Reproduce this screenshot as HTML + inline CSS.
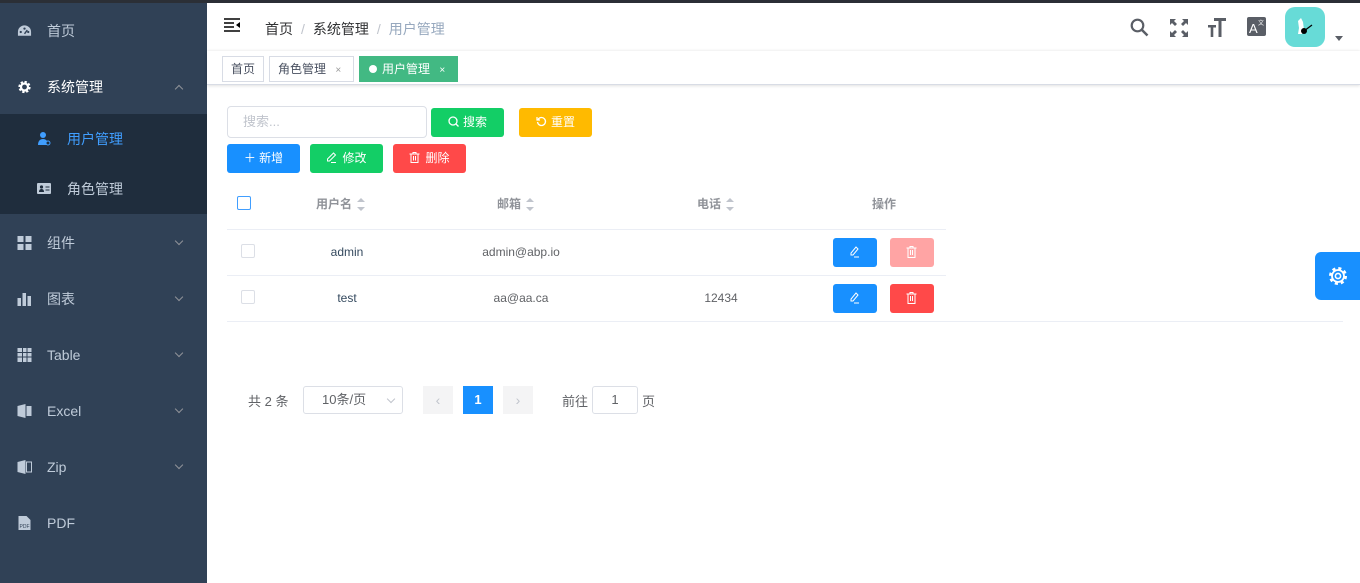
<!DOCTYPE html>
<html><head><meta charset="utf-8"><style>
*{box-sizing:border-box;margin:0;padding:0}
body{width:1360px;height:583px;overflow:hidden;font-family:"Liberation Sans","Noto Sans CJK SC",sans-serif;font-size:14px;background:#fff;position:relative}
.topline{position:absolute;left:0;top:0;width:1360px;height:3px;background:#2b2f36;z-index:5}
.side{position:absolute;left:0;top:0;width:207px;height:583px;background:#304156;color:#bfcbd9}
.mi{position:absolute;left:0;width:207px;height:56px;line-height:56px;padding-left:47px;font-size:14px}
.mi .ic{position:absolute;left:17px;top:21px;width:15px;height:14px}
.mi .ar{position:absolute;left:176px;top:23px;width:6px;height:6px;border-right:1px solid #909399;border-bottom:1px solid #909399;transform:rotate(45deg)}
.mi .up{transform:rotate(-135deg);top:27px}
.sub{position:absolute;left:0;top:114px;width:207px;height:100px;background:#1f2d3d}
.si{position:absolute;left:0;width:207px;height:50px;line-height:50px;padding-left:67px}
.main{position:absolute;left:207px;top:0;right:0;bottom:0}
.hdr{position:absolute;left:0;top:3px;width:1153px;height:48px}
.bc{position:absolute;left:58px;top:16px;font-size:14px;color:#303133}
.bc span.s{color:#c0c4cc;margin:0 8px}
.tags{position:absolute;left:0;top:51px;width:1153px;height:34px;border-bottom:1px solid #d8dce5;box-shadow:0 1px 3px rgba(0,0,0,.12),0 -1px 2px rgba(0,0,0,.04)}
.tag{position:absolute;top:5px;height:26px;line-height:24px;border:1px solid #d8dce5;font-size:12px;color:#495060;padding:0 8px;background:#fff}
.btn{position:absolute;height:29px;line-height:29px;border-radius:3px;color:#fff;font-size:12px;text-align:center}
.th{position:absolute;top:195px;font-size:12px;color:#909399;font-weight:bold}
.sort{display:inline-block;vertical-align:middle;margin-left:5px;width:9px;height:13px;position:relative}
.sort:before{content:"";position:absolute;left:0;top:0;border:4.5px solid transparent;border-bottom-color:#c0c4cc;border-top:0}
.sort:after{content:"";position:absolute;left:0;bottom:0;border:4.5px solid transparent;border-top-color:#c0c4cc;border-bottom:0}
.td{position:absolute;font-size:12px;color:#606266;text-align:center}
.line{position:absolute;height:1px;background:#ebeef5}
.cb{position:absolute;width:14px;height:14px;border:1px solid #dcdfe6;border-radius:2px}
.ab{position:absolute;width:44px;height:29px;border-radius:3px}
.ab svg{position:absolute;left:16px;top:8px}
</style></head><body>
<div class="topline"></div>
<div class="side">
 <div class="mi" style="top:3px"><svg class="ic" viewBox="0 0 16 14"><path d="M8 1a7 7 0 0 0-7 7v4h14V8a7 7 0 0 0-7-7z" fill="#bfcbd9"/><circle cx="4" cy="8" r="1.2" fill="#304156"/><circle cx="8" cy="4.5" r="1.2" fill="#304156"/><circle cx="12" cy="8" r="1.2" fill="#304156"/><path d="M8 10l3-4" stroke="#304156" stroke-width="1.5"/></svg>首页</div>
 <div class="mi" style="top:59px;color:#fff"><svg class="ic" viewBox="0 0 16 16"><circle cx="8" cy="8" r="5.5" fill="none" stroke="#fff" stroke-width="3" stroke-dasharray="2.5 1.8"/><circle cx="8" cy="8" r="4" fill="none" stroke="#fff" stroke-width="2.5"/></svg>系统管理<i class="ar up"></i></div>
 <div class="sub">
  <div class="si" style="top:0;color:#409eff"><svg style="position:absolute;left:37px;top:17px" width="14" height="15" viewBox="0 0 14 15"><circle cx="6" cy="4" r="3" fill="#409eff"/><path d="M1 14c0-4 2-6 5-6s5 2 5 6z" fill="#409eff"/><circle cx="11" cy="12" r="2" fill="#1f2d3d" stroke="#409eff"/></svg>用户管理</div>
  <div class="si" style="top:50px"><svg style="position:absolute;left:37px;top:19px" width="14" height="11" viewBox="0 0 14 11"><rect width="14" height="11" rx="1" fill="#bfcbd9"/><circle cx="4.5" cy="4" r="1.6" fill="#1f2d3d"/><path d="M2 9c0-2 1-3 2.5-3S7 7 7 9z" fill="#1f2d3d"/><path d="M8.5 4h4M8.5 7h4" stroke="#1f2d3d"/></svg>角色管理</div>
 </div>
 <div class="mi" style="top:215px"><svg class="ic" viewBox="0 0 14 14"><rect x="0" y="0" width="6" height="6" fill="#bfcbd9"/><rect x="8" y="0" width="6" height="6" fill="#bfcbd9"/><rect x="0" y="8" width="6" height="6" fill="#bfcbd9"/><rect x="8" y="8" width="6" height="6" fill="#bfcbd9"/></svg>组件<i class="ar"></i></div>
 <div class="mi" style="top:271px"><svg class="ic" viewBox="0 0 14 14"><rect x="0" y="6" width="3.5" height="8" fill="#bfcbd9"/><rect x="5" y="1" width="3.5" height="13" fill="#bfcbd9"/><rect x="10" y="4" width="3.5" height="10" fill="#bfcbd9"/></svg>图表<i class="ar"></i></div>
 <div class="mi" style="top:327px"><svg class="ic" viewBox="0 0 14 14"><rect width="14" height="14" fill="#bfcbd9"/><path d="M0 4.5h14M0 9h14M5 0v14M9.5 0v14" stroke="#304156"/></svg>Table<i class="ar"></i></div>
 <div class="mi" style="top:383px"><svg class="ic" viewBox="0 0 14 14"><path d="M0 2l8-2v14l-8-2z" fill="#bfcbd9"/><rect x="9" y="2" width="5" height="10" fill="#bfcbd9"/></svg>Excel<i class="ar"></i></div>
 <div class="mi" style="top:439px"><svg class="ic" viewBox="0 0 14 14"><path d="M0 2l8-2v14l-8-2z" fill="#bfcbd9"/><rect x="9" y="2" width="5" height="10" fill="none" stroke="#bfcbd9"/></svg>Zip<i class="ar"></i></div>
 <div class="mi" style="top:495px"><svg class="ic" viewBox="0 0 14 14"><path d="M1 0h8l4 4v10H1z" fill="#bfcbd9"/><text x="2" y="12" font-size="5" fill="#304156">PDF</text></svg>PDF</div>
</div>
<div class="main">
 <div class="hdr">
  <svg style="position:absolute;left:17px;top:15px" width="17" height="14" viewBox="0 0 17 14"><path d="M0 1h16M0 5h10M0 9h10M0 13h16" stroke="#000" stroke-width="1.6"/><path d="M16 4l-4 3 4 3z" fill="#000"/></svg>
  <div class="bc">首页<span class="s">/</span>系统管理<span class="s">/</span><span style="color:#97a8be">用户管理</span></div>
  <svg style="position:absolute;left:923px;top:15px" width="19" height="19" viewBox="0 0 19 19"><circle cx="7.5" cy="7.5" r="5.8" fill="none" stroke="#5a5e66" stroke-width="2.2"/><path d="M11.5 11.5l6 6" stroke="#5a5e66" stroke-width="2.5"/></svg>
  <svg style="position:absolute;left:963px;top:16px" width="18" height="18" viewBox="0 0 18 18" fill="#5a5e66"><path d="M0 0h6l-2 2 3 3-2 2-3-3-2 2zM18 0v6l-2-2-3 3-2-2 3-3-2-2zM0 18v-6l2 2 3-3 2 2-3 3 2 2zM18 18h-6l2-2-3-3 2-2 3 3 2-2z"/></svg>
  <svg style="position:absolute;left:1001px;top:15px" width="18" height="19" viewBox="0 0 18 19" fill="#5a5e66"><rect x="6" y="0" width="12" height="3"/><rect x="10.5" y="0" width="3" height="19"/><rect x="0" y="7" width="8" height="2.5"/><rect x="2.7" y="7" width="2.6" height="12"/></svg>
  <svg style="position:absolute;left:1040px;top:14px" width="19" height="19" viewBox="0 0 19 19"><rect width="19" height="19" rx="2" fill="#5a5e66"/><text x="2" y="16" font-size="13" fill="#fff" font-family="Liberation Sans">A</text><text x="11" y="8" font-size="6" fill="#fff">文</text></svg>
  <div style="position:absolute;left:1078px;top:4px;width:40px;height:40px;border-radius:10px;background:#67dbd7"><svg width="40" height="40" viewBox="0 0 40 40"><path d="M13 14l3-3 2 4 1 8-2 4h-4l1-6z" fill="#fff"/><circle cx="19" cy="24" r="3" fill="#000"/><path d="M19 24l8-6" stroke="#000" stroke-width="1.2"/></svg></div>
  <div style="position:absolute;left:1128px;top:33px;border:4px solid transparent;border-top:5px solid #5a5e66"></div>
 </div>
 <div class="tags">
  <div class="tag" style="left:15px">首页</div>
  <div class="tag" style="left:62px;width:85px">角色管理 <span style="font-size:10px;color:#999;margin-left:6px">×</span></div>
  <div class="tag" style="left:152px;width:99px;background:#42b983;border-color:#42b983;color:#fff;padding-left:9px"><span style="display:inline-block;width:8px;height:8px;border-radius:50%;background:#fff;margin-right:5px"></span>用户管理 <span style="font-size:10px;margin-left:6px">×</span></div>
 </div>
 <div style="position:absolute;left:20px;top:106px;width:200px;height:32px;border:1px solid #dcdfe6;border-radius:4px;padding-left:15px;line-height:30px;font-size:13px;color:#c0c4cc">搜索...</div>
 <div class="btn" style="left:224px;top:108px;width:73px;background:#13ce66"><svg width="11" height="11" viewBox="0 0 11 11" style="vertical-align:-1px;margin-right:4px"><circle cx="5" cy="5" r="4" fill="none" stroke="#fff" stroke-width="1.3"/><path d="M8 8l2.5 2.5" stroke="#fff" stroke-width="1.3"/></svg>搜索</div>
 <div class="btn" style="left:312px;top:108px;width:73px;background:#ffba00"><svg width="11" height="11" viewBox="0 0 11 11" style="vertical-align:-1px;margin-right:4px"><path d="M2 3.5A4 4 0 1 1 1.5 6" fill="none" stroke="#fff" stroke-width="1.3"/><path d="M1 1v3h3" fill="none" stroke="#fff" stroke-width="1.2"/></svg>重置</div>
 <div class="btn" style="left:20px;top:144px;width:73px;background:#1890ff">＋ 新增</div>
 <div class="btn" style="left:103px;top:144px;width:73px;background:#13ce66"><svg width="11" height="11" viewBox="0 0 11 11" style="vertical-align:-1px;margin-right:5px"><path d="M7.5 1l2 2-6 6H1.5V7z" fill="none" stroke="#fff"/><path d="M5 10.5h5" stroke="#fff"/></svg>修改</div>
 <div class="btn" style="left:186px;top:144px;width:73px;background:#ff4949"><svg width="11" height="11" viewBox="0 0 11 11" style="vertical-align:-1px;margin-right:5px"><path d="M0.5 2h10M4 2V.5h3V2M2 2v8.5h7V2M4.5 4v4.5M6.5 4v4.5" fill="none" stroke="#fff"/></svg>删除</div>
 <div class="cb" style="left:30px;top:196px;border-color:#409eff;border-width:1.5px"></div>
 <div class="th" style="left:109px">用户名<i class="sort"></i></div>
 <div class="th" style="left:290px">邮箱<i class="sort"></i></div>
 <div class="th" style="left:490px">电话<i class="sort"></i></div>
 <div class="th" style="left:665px">操作</div>
 <div class="line" style="left:20px;top:229px;width:719px"></div>
 <div class="cb" style="left:34px;top:244px"></div>
 <div class="td" style="left:100px;width:80px;top:245px;color:#34495e">admin</div>
 <div class="td" style="left:254px;width:120px;top:245px">admin@abp.io</div>
 <div class="ab" style="left:626px;top:238px;background:#1890ff"><svg width="11" height="12" viewBox="0 0 11 12"><path d="M7 1l2 2-5 6H2V7z" fill="none" stroke="#fff"/><path d="M5 11h5" stroke="#fff"/></svg></div>
 <div class="ab" style="left:683px;top:238px;background:#ffa4a4"><svg width="11" height="12" viewBox="0 0 11 12"><path d="M0.5 2h10M4 2V.5h3V2M2 2v9.5h7V2M4.5 4v5M6.5 4v5" fill="none" stroke="#fff"/></svg></div>
 <div class="line" style="left:20px;top:275px;width:719px"></div>
 <div class="cb" style="left:34px;top:290px"></div>
 <div class="td" style="left:100px;width:80px;top:291px;color:#34495e">test</div>
 <div class="td" style="left:254px;width:120px;top:291px">aa@aa.ca</div>
 <div class="td" style="left:484px;width:60px;top:291px">12434</div>
 <div class="ab" style="left:626px;top:284px;background:#1890ff"><svg width="11" height="12" viewBox="0 0 11 12"><path d="M7 1l2 2-5 6H2V7z" fill="none" stroke="#fff"/><path d="M5 11h5" stroke="#fff"/></svg></div>
 <div class="ab" style="left:683px;top:284px;background:#ff4949"><svg width="11" height="12" viewBox="0 0 11 12"><path d="M0.5 2h10M4 2V.5h3V2M2 2v9.5h7V2M4.5 4v5M6.5 4v5" fill="none" stroke="#fff"/></svg></div>
 <div class="line" style="left:20px;top:321px;width:1116px"></div>
 <div style="position:absolute;left:41px;top:391px;font-size:13px;color:#606266">共 2 条</div>
 <div style="position:absolute;left:96px;top:386px;width:100px;height:28px;border:1px solid #dcdfe6;border-radius:3px;line-height:26px;padding-left:18px;font-size:13px;color:#606266">10条/页<span style="position:absolute;right:8px;top:9px;width:6px;height:6px;border-right:1px solid #c0c4cc;border-bottom:1px solid #c0c4cc;transform:rotate(45deg)"></span></div>
 <div style="position:absolute;left:216px;top:386px;width:30px;height:28px;background:#f4f4f5;color:#c0c4cc;text-align:center;line-height:28px">‹</div>
 <div style="position:absolute;left:256px;top:386px;width:30px;height:28px;background:#1890ff;color:#fff;text-align:center;line-height:28px;font-weight:bold;font-size:13px">1</div>
 <div style="position:absolute;left:296px;top:386px;width:30px;height:28px;background:#f4f4f5;color:#c0c4cc;text-align:center;line-height:28px">›</div>
 <div style="position:absolute;left:355px;top:391px;font-size:13px;color:#606266">前往</div>
 <div style="position:absolute;left:385px;top:386px;width:46px;height:28px;border:1px solid #dcdfe6;border-radius:3px;text-align:center;line-height:26px;font-size:13px;color:#606266">1</div>
 <div style="position:absolute;left:435px;top:391px;font-size:13px;color:#606266">页</div>
</div>
<div style="position:absolute;left:1315px;top:252px;width:45px;height:48px;background:#1890ff;border-radius:6px 0 0 6px"><svg style="position:absolute;left:12px;top:13px" width="22" height="22" viewBox="0 0 22 22"><circle cx="11" cy="11" r="7.5" fill="none" stroke="#fff" stroke-width="3" stroke-dasharray="3 2.9"/><circle cx="11" cy="11" r="6" fill="none" stroke="#fff" stroke-width="1.8"/><circle cx="11" cy="11" r="2.6" fill="none" stroke="#fff" stroke-width="1.6"/></svg></div>
</body></html>
